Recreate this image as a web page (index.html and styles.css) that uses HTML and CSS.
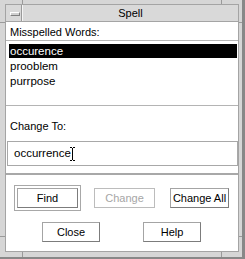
FILE: index.html
```html
<!doctype html>
<html lang="en">
  <head>
    <meta charset="utf-8">
    <title>Spell</title>
    <link rel="stylesheet" href="styles.css">
  </head>
  <body>
    <div class="frame">
      <div class="inner">
        <div class="titlebar">
          <div class="menu-btn"><span class="menu-glyph"></span></div>
          <div class="title">Spell</div>
        </div>
        <div class="content">
          <div class="label top-label">Misspelled Words:</div>
          <ul class="words">
            <li class="selected">occurence</li>
            <li>prooblem</li>
            <li>purrpose</li>
          </ul>
          <div class="label change-label">Change To:</div>
          <div class="field">occurrence<svg class="ibeam" width="5" height="14" viewBox="0 0 5 14"><path d="M0 0.5h2M3 0.5h2M2.5 1v12M0 13.5h2M3 13.5h2" stroke="#000" stroke-width="1" fill="none"/></svg></div>
          <div class="buttons">
            <div class="row row-top">
              <div class="default-ring"><button class="btn btn-find">Find</button></div>
              <button class="btn btn-change" disabled>Change</button>
              <button class="btn btn-all">Change All</button>
            </div>
            <div class="row row-bottom">
              <button class="btn btn-close">Close</button>
              <button class="btn btn-help">Help</button>
            </div>
          </div>
        </div>
      </div>
      <span class="notch notch-tl"></span>
      <span class="notch notch-tr"></span>
      <span class="notch notch-bl"></span>
      <span class="notch notch-br"></span>
      <span class="notch notch-lt"></span>
      <span class="notch notch-rt"></span>
      <span class="notch notch-lb"></span>
      <span class="notch notch-rb"></span>
    </div>
  </body>
</html>
```

FILE: styles.css
```css
body {
  margin: 0;
  background: #d6d6d6;
  font-family: "Liberation Sans", Arial, sans-serif;
  font-size: 11px;
  color: #000;
}
.frame {
  position: relative;
  width: 245px;
  height: 259px;
  box-sizing: border-box;
  background: #d6d6d6;
  border-right: 3px solid #888;
  border-bottom: 2px solid #888;
  padding: 4px 3px 5px 5px;
  display: flex;
  flex-direction: column;
}
.inner {
  flex: 1;
  display: flex;
  flex-direction: column;
  border: 1px solid #a4a4a4;
}
.titlebar {
  height: 16px;
  display: flex;
  background: #d9d9d9;
  border-bottom: 1px solid #a4a4a4;
}
.menu-btn {
  width: 16px;
  border-right: 1px solid #9a9a9a;
  box-sizing: border-box;
  padding: 7px 0 0 4px;
}
.menu-glyph {
  display: block;
  width: 8px;
  height: 2px;
  background: #d0d0d0;
  border: 1px solid;
  border-color: #fff #808080 #808080 #fff;
}
.title {
  flex: 1;
  text-align: center;
  line-height: 16px;
  border-left: 1px solid #f4f4f4;
}
.content {
  flex: 1;
  display: flex;
  flex-direction: column;
  background: #fff;
}
.label {
  padding-left: 4px;
  line-height: 14px;
}
.top-label {
  height: 18px;
  padding-top: 3px;
  box-sizing: border-box;
  border-bottom: 1px solid #b4b4b4;
  height: 19px;
}
.words {
  list-style: none;
  margin: 0;
  padding: 3px 1px 0 3px;
  height: 65px;
  box-sizing: border-box;
  border-bottom: 1px solid #b4b4b4;
}
.words li {
  height: 14px;
  line-height: 14px;
  margin-bottom: 1px;
  padding-left: 1px;
  font-size: 11.5px;
}
.words .selected {
  background: #000;
  color: #fff;
}
.change-label {
  padding-top: 13px;
  padding-bottom: 8px;
}
.field {
  margin: 0 0 7px 1px;
  height: 25px;
  box-sizing: border-box;
  border: 1px solid #a8a8a8;
  padding-left: 6px;
  line-height: 23px;
  font-size: 11.5px;
  display: flex;
  align-items: center;
}
.ibeam {
  margin-left: -1px;
}
.buttons {
  flex: 1;
  border-top: 2px solid #a8a8a8;
  padding-top: 10px;
}
.row {
  display: flex;
  align-items: center;
}
.row-top {
  padding-left: 8px;
}
.row-bottom {
  padding-left: 36px;
  margin-top: 11px;
  gap: 43px;
}
.default-ring {
  border: 1px solid #a8a8a8;
  padding: 2px;
}
.btn {
  font: inherit;
  color: #000;
  background: #fff;
  height: 20px;
  padding: 0;
  margin: 0;
  border: 1px solid;
  border-color: #a4a4a4 #7c7c7c #7c7c7c #a4a4a4;
  box-sizing: border-box;
  border-radius: 0;
}
.btn-find {
  display: block;
  width: 61px;
}
.btn-change {
  width: 61px;
  margin-left: 13px;
  color: #a6a6a6;
  border-color: #bcbcbc;
}
.btn-all {
  width: 59px;
  margin-left: 15px;
}
.btn-close,
.btn-help {
  width: 58px;
}
.notch {
  position: absolute;
  background: #9a9a9a;
}
.notch-tl { left: 22px; top: 0; width: 1px; height: 4px; }
.notch-tr { left: 221px; top: 0; width: 1px; height: 4px; }
.notch-bl { left: 22px; bottom: 0; width: 1px; height: 5px; }
.notch-br { left: 221px; bottom: 0; width: 1px; height: 5px; }
.notch-lt { left: 0; top: 22px; width: 5px; height: 1px; }
.notch-rt { right: 0; top: 22px; width: 3px; height: 1px; }
.notch-lb { left: 0; top: 236px; width: 5px; height: 1px; }
.notch-rb { right: 0; top: 236px; width: 3px; height: 1px; }
```
